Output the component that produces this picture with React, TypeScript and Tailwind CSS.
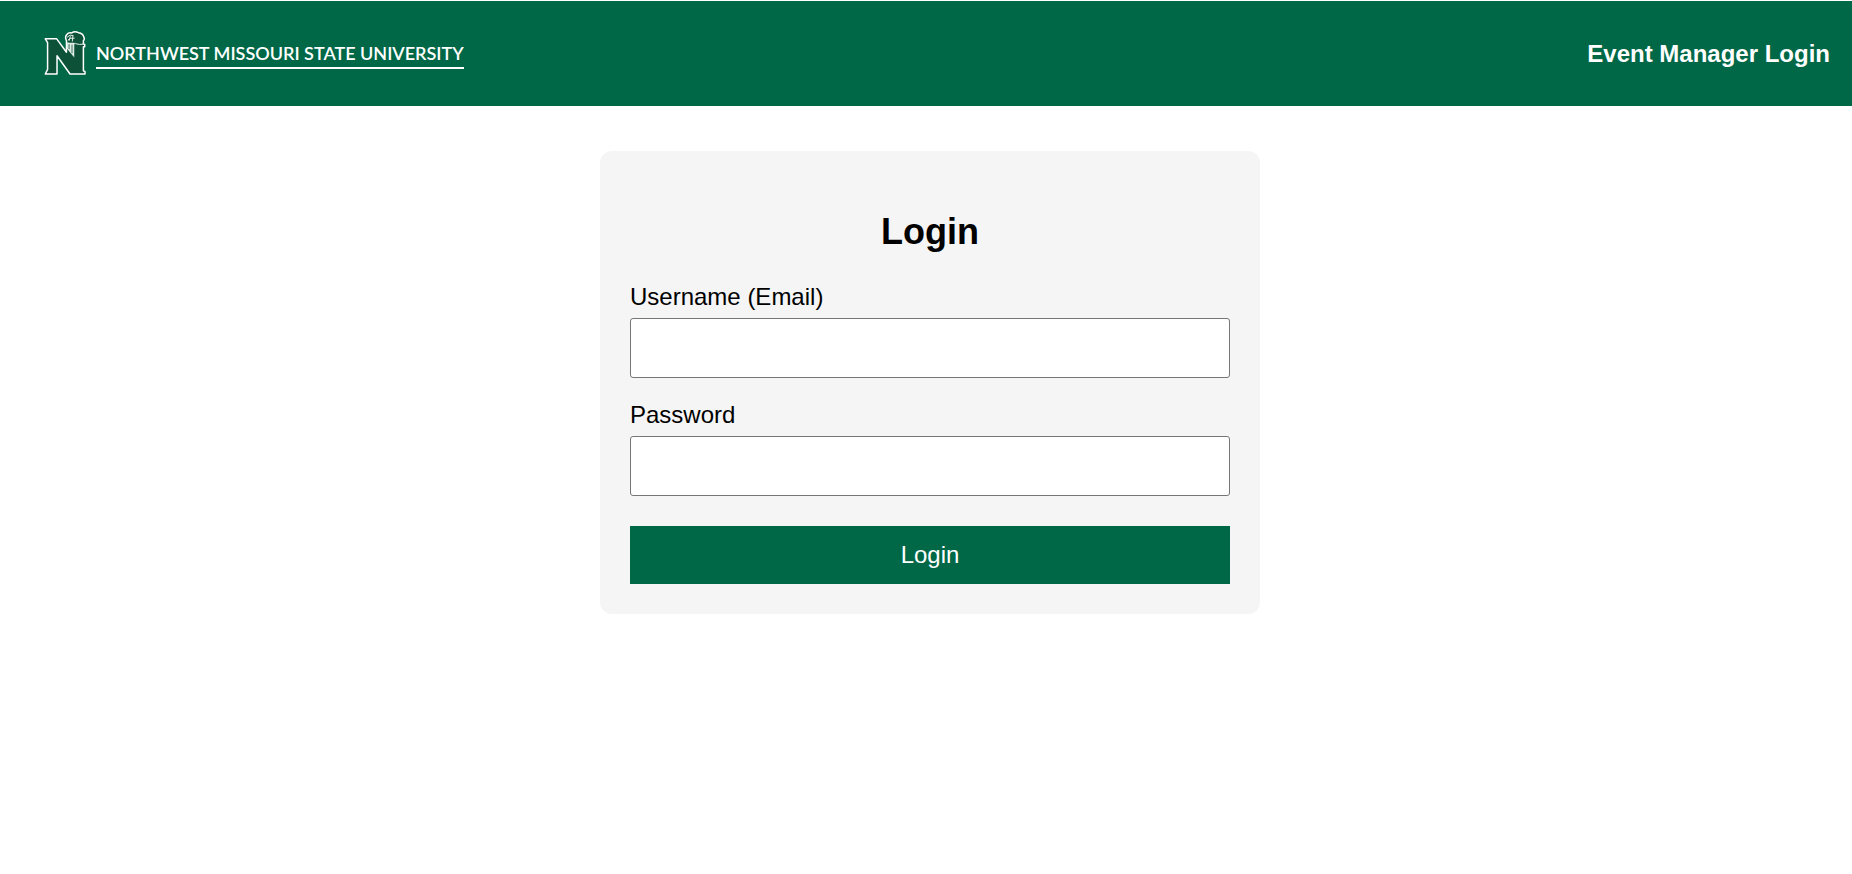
function UniversityMark() {
  return (
    <svg viewBox="24 27 129 141" className="h-[46px] w-[42px] shrink-0" aria-hidden="true">
      <path
        d="M28 54H63L93 95V60Q87 46 95 40Q99 34 109 36Q118 29 130 35Q144 37 146 48Q150 55 145 60V70L149 71V78H145V152L150 155V162H104L64 106V162H28L35 148V66Z"
        fill="#0d5238"
        stroke="#ffffff"
        strokeWidth="4.6"
        strokeLinejoin="round"
      />
      <path d="M94 66H117V111L94 84Z" fill="#dfeae4" />
      <path d="M101 70V86M110 70V98" stroke="#0d5238" strokeWidth="2.4" />
      <path
        d="M95 49Q104 39 114 44M97 58Q106 49 118 52M96 66Q108 75 121 68M121 69Q133 73 146 70M105 46L101 60M113 44L111 62"
        fill="none"
        stroke="#e6f0eb"
        strokeWidth="3"
      />
    </svg>
  );
}

function Field({ id, label, type }: { id: string; label: string; type: string }) {
  return (
    <div className="flex flex-col gap-2">
      <label htmlFor={id} className="text-2xl leading-[27px]">
        {label}
      </label>
      <input
        id={id}
        name={id}
        type={type}
        className="h-[60px] w-full rounded-[3px] border border-[#767676] bg-white px-4 text-2xl"
      />
    </div>
  );
}

export default function App() {
  return (
    <div className="min-h-screen bg-white pt-px font-['Liberation_Sans',Arial,sans-serif] text-black">
      <header className="flex h-[105px] items-center justify-between bg-[#006847] pr-[22px] pl-11 text-white">
        <a href="#" className="mb-0.5 flex items-center gap-2.5">
          <UniversityMark />
          <span className="mt-1 border-b-2 border-white pb-0.5 font-['Lato',sans-serif] text-lg leading-6 font-semibold whitespace-nowrap">
            NORTHWEST MISSOURI STATE UNIVERSITY
          </span>
        </a>
        <p className="text-2xl font-bold">Event Manager Login</p>
      </header>
      <main className="pt-[45px] pr-4 pl-6">
        <form
          className="mx-auto w-full max-w-[660px] rounded-xl bg-[#f5f5f5] p-[30px]"
          onSubmit={(e) => e.preventDefault()}
        >
          <h1 className="my-[30px] text-center text-4xl leading-[42px] font-bold">Login</h1>
          <div className="flex flex-col gap-[23px]">
            <Field id="username" label="Username (Email)" type="email" />
            <Field id="password" label="Password" type="password" />
          </div>
          <button type="submit" className="mt-[30px] h-[58px] w-full bg-[#006847] text-2xl text-white">
            Login
          </button>
        </form>
      </main>
    </div>
  );
}
